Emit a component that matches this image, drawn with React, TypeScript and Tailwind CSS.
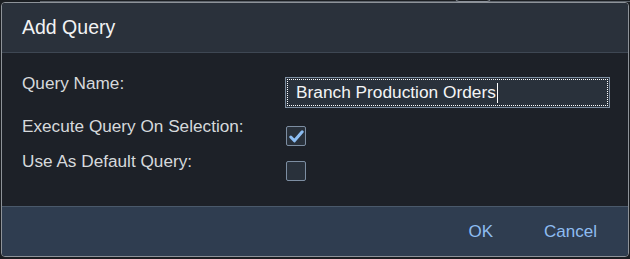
const font = { fontFamily: '"Liberation Sans", Arial, sans-serif' };

const CheckBox = ({ checked }: { checked: boolean }) => (
  <div className="ml-[1px] mt-[10px] flex h-[20px] w-[20px] items-center justify-center rounded-[2px] border border-[#7d8ea2] bg-[#29313b]">
    {checked && (
      <svg width="15" height="13" viewBox="0 0 15 13">
        <path
          d="M1.8 7 L5.4 10.8 L13.2 1.8"
          fill="none"
          stroke="#8cbdf2"
          strokeWidth="3"
          strokeLinecap="round"
          strokeLinejoin="round"
        />
      </svg>
    )}
  </div>
);

const Row = ({
  label,
  height,
  children,
}: {
  label: string;
  height: string;
  children: React.ReactNode;
}) => (
  <div className={`flex items-start ${height}`}>
    <div className="w-[263px] text-[17.2px] leading-[20px] text-[#d6d9dc]">
      {label}
    </div>
    {children}
  </div>
);

export default function App() {
  return (
    <div
      className="relative h-[259px] w-[630px] overflow-hidden bg-[#1b1e22] px-[1px] pt-[2px]"
      style={font}
    >
      {/* stuff behind the dialog */}
      <div className="absolute left-[40px] right-0 top-0 h-[2px] border-b border-[#5d636b]" />
      <div className="absolute left-[455px] top-[-6px] h-[8px] w-[36px] rounded-[4px] border border-[#8b919a]" />

      <div className="relative flex h-[255px] flex-col overflow-hidden rounded-[4px] border border-[#8e9399]">
        <div className="flex h-[50px] items-center border-b border-[#3e4753] bg-[#2a313b] pl-[20px] pt-[1px]">
          <h1 className="text-[19.5px] text-[#f2f3f4]">Add Query</h1>
        </div>

        <div className="flex h-[153px] flex-col bg-[#1d2128] pl-[20px] pt-[20px]">
          <Row label="Query Name:" height="h-[43px]">
            <div className="mt-[4px] flex h-[31px] w-[325px] items-center border border-[#7f8fa1] bg-[#29313b] pl-[10px] outline-1 outline-offset-[-3px] outline-white outline-dotted">
              <span className="text-[17.3px] text-[#f4f5f6]">
                Branch Production Orders
              </span>
              <span className="ml-[1px] h-[20px] w-[1px] bg-white" />
            </div>
          </Row>
          <Row label="Execute Query On Selection:" height="h-[35px]">
            <CheckBox checked />
          </Row>
          <Row label="Use As Default Query:" height="h-[35px]">
            <CheckBox checked={false} />
          </Row>
        </div>

        <div className="flex flex-1 items-center justify-end gap-[51px] border-t border-[#4a596b] bg-[#2f3d50] pr-[31px]">
          <button className="text-[17px] text-[#8ebcf0]">OK</button>
          <button className="text-[17px] text-[#8ebcf0]">Cancel</button>
        </div>
      </div>
    </div>
  );
}
